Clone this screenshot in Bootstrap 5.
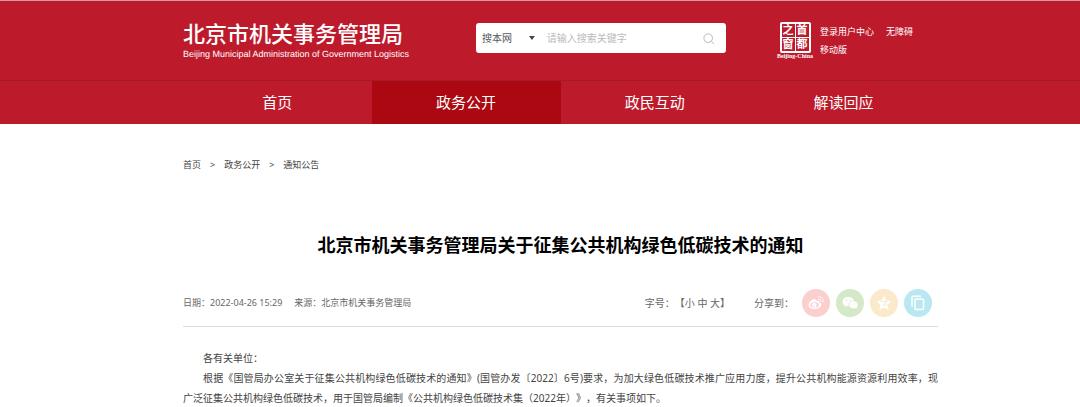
<!DOCTYPE html>
<html lang="zh-CN">
<head>
<meta charset="utf-8">
<meta name="viewport" content="width=device-width, initial-scale=1">
<title>北京市机关事务管理局关于征集公共机构绿色低碳技术的通知</title>
<link href="https://cdn.jsdelivr.net/npm/bootstrap@5.3.0/dist/css/bootstrap.min.css" rel="stylesheet">
<style>
  body { font-family: "Noto Sans", "Noto Sans CJK SC", sans-serif; font-size: 10px; line-height: 20px; color: #444; background: #fff; text-spacing-trim: space-all; }
  a { color: inherit; text-decoration: none; }
  .page-band { padding-left: 183px; padding-right: 142px; }
  .site-head { background: #bd1b2c; color: #fff; border-top: 1px solid #d69aa2; }
  .head-row { height: 79px; }
  .brand-block { width: 293px; padding-top: 19px; }
  .brand-cn { font-family: "Noto Sans CJK SC", sans-serif; font-size: 22px; line-height: 24px; font-weight: 500; }
  .brand-en { font-family: "Liberation Sans", sans-serif; font-size: 9px; line-height: 14px; padding-top: 3px; text-rendering: geometricPrecision; }
  .search-box { width: 250px; height: 30px; margin-top: 22px; border-radius: 3px; background: #fff; }
  .search-box select { appearance: none; width: 68px; border: 0; padding: 0 0 0 6px; color: #555; background: none; }
  .search-box .caret { width: 6px; height: 4px; margin-left: -14px; margin-right: 12px; pointer-events: none; }
  .search-box input { border: 0; padding: 0; outline: 0; min-width: 0; color: #555; }
  .search-box input::placeholder { color: #bbb; }
  .plain-btn { border: 0; padding: 0; background: none; color: inherit; line-height: inherit; }
  .search-box .plain-btn { width: 35px; color: #bbb; padding-top: 2px; }
  .seal-link { margin: 21px 0 0 51px; width: 36px; }
  .seal { display: grid; grid-template-columns: 1fr 1fr; gap: 1px; width: 31px; height: 31px; padding: 2px; border-radius: 2px; background: #fff; }
  .seal span { background: #bd1b2c; font: 700 11px/13px "Liberation Serif", "Noto Sans CJK SC", serif; text-align: center; }
  .seal-caption { font: 700 6px/7px "Liberation Serif", serif; white-space: nowrap; }
  .head-links { font-size: 9px; line-height: 18px; margin: 22px 0 0 7px; column-gap: 12px; }
  .main-nav { border-top: 1px solid #a51a29; }
  .main-nav a { font-size: 15px; line-height: 43px; padding: 0; border-radius: 0; color: #fff; }
  .main-nav a:hover { color: #fff; }
  .main-nav a.active { background: #ac0811; }
  .crumbs { font-size: 9px; line-height: 20px; padding-top: 31px; gap: 9px; }
  .article-title { font-size: 18px; line-height: 28px; font-weight: 700; color: #000; margin: 56px 0 0; }
  .meta-row { height: 48px; margin-top: 20px; padding: 10px 6px 9px 0; color: #666; border-bottom: 1px solid #ddd; }
  .meta-small { font-size: 9px; gap: 12px; }
  .share-list { gap: 6px; }
  .share-btn { width: 28px; height: 28px; border-radius: 50%; color: #fff; }
  .share-btn svg, .search-box svg, .caret { display: block; }
  .share-btn svg { margin: 0 auto; }
  .weibo { background: #fbcfce; }
  .wechat { background: #d5e8c7; }
  .qzone { background: #faeacb; }
  .copy { background: #bae8f2; }
  .article-text { padding: 21px 0 0; }
  .article-text p { margin: 0; text-indent: 2em; }
  .full-line { display: block; text-align-last: justify; }
  .rest-line { display: block; text-indent: 0; }
</style>
</head>
<body>
<header class="site-head">
  <div class="page-band head-row d-flex align-items-start">
    <a href="#" class="brand-block flex-shrink-0">
      <div class="brand-cn">北京市机关事务管理局</div>
      <div class="brand-en">Beijing Municipal Administration of Government Logistics</div>
    </a>
    <form class="search-box d-flex align-items-center flex-shrink-0">
      <select aria-label="搜索范围"><option>搜本网</option></select>
      <svg class="caret" viewBox="0 0 6 4" fill="#444"><path d="M0 0h6L3 4z"/></svg>
      <input class="flex-grow-1" type="text" placeholder="请输入搜索关键字" aria-label="搜索关键字">
      <button type="button" class="plain-btn d-flex justify-content-center" aria-label="搜索">
        <svg width="12" height="12" viewBox="0 0 12 12" fill="none" stroke="currentColor"><circle cx="5.2" cy="5.2" r="4.3"/><path d="M8.4 8.4l2.8 2.8"/></svg>
      </button>
    </form>
    <a href="#" class="seal-link flex-shrink-0">
      <div class="seal mx-auto"><span>之</span><span>首</span><span>窗</span><span>都</span></div>
      <div class="seal-caption text-center">Beijing-China</div>
    </a>
    <nav class="head-links d-flex flex-wrap flex-grow-1" aria-label="用户">
      <a href="#">登录用户中心</a><a href="#">无障碍</a><a href="#" class="w-100">移动版</a>
    </nav>
  </div>
  <div class="main-nav page-band">
    <nav class="nav nav-justified" aria-label="主导航">
      <a class="nav-link" href="#">首页</a>
      <a class="nav-link active" href="#" aria-current="page">政务公开</a>
      <a class="nav-link" href="#">政民互动</a>
      <a class="nav-link" href="#">解读回应</a>
    </nav>
  </div>
</header>
<main class="page-band">
  <nav class="crumbs d-flex" aria-label="位置">
    <a href="#">首页</a><span>&gt;</span><a href="#">政务公开</a><span>&gt;</span><a href="#">通知公告</a>
  </nav>
  <h1 class="article-title text-center">北京市机关事务管理局关于征集公共机构绿色低碳技术的通知</h1>
  <div class="meta-row d-flex align-items-center justify-content-between">
    <div class="meta-small d-flex"><span>日期：2022-04-26 15:29</span><span>来源：北京市机关事务管理局</span></div>
    <div class="d-flex align-items-center">
      <div class="me-4">字号：【<button type="button" class="plain-btn">小</button> <button type="button" class="plain-btn">中</button> <button type="button" class="plain-btn">大</button>】</div>
      <span class="me-2">分享到：</span>
      <div class="d-flex share-list">
        <button type="button" class="plain-btn share-btn weibo" aria-label="微博">
          <svg width="18" height="18" viewBox="0 0 18 18" fill="none" stroke="currentColor" stroke-linecap="round"><path d="M7.2 5C4.400 5.600 1.600 8.600 1.600 11c0 2.700 3 4 6 4 3.800 0 6.600-2 6.600-4.300 0-1.300-1-1.900-2.100-2.200.4-1.300-.4-2.300-3.600-1.200C9 5.800 8.500 4.800 7.200 5z" fill="currentColor" stroke="none"/><ellipse cx="7.600" cy="11" rx="4.300" ry="2.800" fill="#fbcfce" stroke="none"/><circle cx="7.200" cy="11.200" r="2.300" fill="currentColor" stroke="none"/><circle cx="6.700" cy="11.700" r=".7" fill="#fbcfce" stroke="none"/><path d="M11.500 5.400c1.600-.3 2.600.8 2.200 2.200M11.500 3c3.200-.6 5.300 2 4.500 4.900"/></svg>
        </button>
        <button type="button" class="plain-btn share-btn wechat" aria-label="微信">
          <svg width="18" height="18" viewBox="0 0 18 18" fill="currentColor"><path d="M7.300 3C4 3 1.500 5 1.500 7.700c0 1.500.8 2.800 2.100 3.600L3.100 13l2-1c.7.200 1.400.3 2.200.3h.5c-1-3 1.600-5.800 5.200-5.600C12.400 4.600 10.200 3 7.300 3z"/><path d="M12.500 7.300c-2.500 0-4.200 1.600-4.200 3.600s1.900 3.600 4.300 3.600c.6 0 1.100-.1 1.600-.3l1.600.8-.4-1.400c.9-.7 1.400-1.600 1.400-2.700 0-2-1.900-3.600-4.300-3.600z"/><g fill="#d5e8c7"><circle cx="5.400" cy="6.200" r=".7"/><circle cx="9.200" cy="6.200" r=".7"/><circle cx="11.200" cy="9.900" r=".5"/><circle cx="14" cy="9.900" r=".5"/></g></svg>
        </button>
        <button type="button" class="plain-btn share-btn qzone" aria-label="QQ空间">
          <svg width="18" height="18" viewBox="0 0 18 18" fill="currentColor"><path d="M9 1.800l2.200 4.700 5.200.7-3.800 3.500 1 5.300L9 13.500 4.400 16l1-5.300L1.600 7.200l5.200-.7z"/><path d="M6 7.600c2-.4 4-.4 6 0L8.200 11c1.300.4 2.800.4 4.300.1" fill="none" stroke="#faeacb"/></svg>
        </button>
        <button type="button" class="plain-btn share-btn copy" aria-label="复制">
          <svg width="18" height="18" viewBox="0 0 18 18" fill="none" stroke="currentColor" stroke-width="1.500"><rect x="6" y="5" width="8.500" height="10.500" rx="1"/><path d="M3 12.500V3.500q0-1.200 1.200-1.200H12"/></svg>
        </button>
      </div>
    </div>
  </div>
  <article class="article-text">
    <p>各有关单位：</p>
    <p><span class="full-line">根据《国管局办公室关于征集公共机构绿色低碳技术的通知》(国管办发〔2022〕6号)要求，为加大绿色低碳技术推广应用力度，提升公共机构能源资源利用效率，现</span><span class="rest-line">广泛征集公共机构绿色低碳技术，用于国管局编制《公共机构绿色低碳技术集（2022年）》，有关事项如下。</span></p>
  </article>
</main>
<script src="https://cdn.jsdelivr.net/npm/bootstrap@5.3.0/dist/js/bootstrap.bundle.min.js"></script>
</body>
</html>
